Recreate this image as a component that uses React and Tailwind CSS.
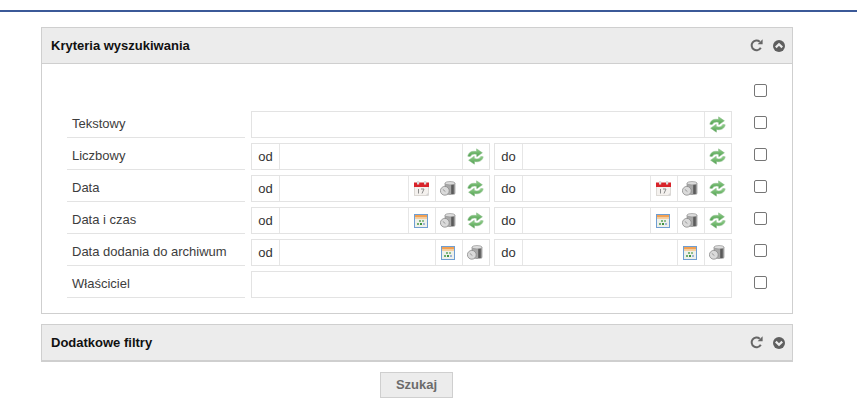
const F = { fontFamily: '"Liberation Sans", Arial, sans-serif' };

function Refresh() {
  return (
    <svg width="17" height="17" viewBox="0 0 17 17" className="block">
      <defs>
        <linearGradient id="gr" x1="0" y1="0" x2="0" y2="1">
          <stop offset="0" stopColor="#93d08c" />
          <stop offset="1" stopColor="#4f9f4f" />
        </linearGradient>
      </defs>
      <path d="M0.8 8.2 C1.4 4.4 5 2.4 9.4 3.6 L9.6 0.8 L15.4 4.8 L9.8 8.8 L9.6 6.4 C6.8 5.6 4.4 6.2 3.2 8.6 Z" fill="url(#gr)" stroke="#86b886" strokeWidth="0.5" />
      <path d="M16.2 8.8 C15.6 12.6 12 14.6 7.6 13.4 L7.4 16.2 L1.6 12.2 L7.2 8.2 L7.4 10.6 C10.2 11.4 12.6 10.8 13.8 8.4 Z" fill="url(#gr)" stroke="#86b886" strokeWidth="0.5" />
    </svg>
  );
}

function CalRed() {
  return (
    <svg width="15" height="15" viewBox="0 0 15 15" className="block">
      <rect x="0.5" y="4" width="14" height="10.5" fill="#f4f1ee" stroke="#c9c5c0" strokeWidth="0.6" />
      <rect x="0" y="1.5" width="15" height="4.5" fill="#d8232a" />
      <rect x="3" y="0" width="2.2" height="3.5" fill="#dcdcdc" />
      <rect x="10" y="0" width="2.2" height="3.5" fill="#dcdcdc" />
      <path d="M4.5 8 V12.5 M7 8 H10 L8 12.5" fill="none" stroke="#8d8d8d" strokeWidth="1" />
      <path d="M11.5 14.5 L14.5 11.5 V14.5 Z" fill="#d5d5d5" />
    </svg>
  );
}

function CalBlue() {
  return (
    <svg width="14" height="14" viewBox="0 0 14 14" className="block">
      <rect x="0.5" y="0.5" width="13" height="13" fill="#eef0ea" stroke="#6f9ed2" />
      <rect x="1" y="1" width="12" height="2.5" fill="#f2a154" />
      <rect x="1" y="3.5" width="12" height="1.5" fill="#f6cfa0" />
      <rect x="5" y="6" width="2" height="2" fill="#7fb77f" />
      <rect x="8" y="6" width="2" height="2" fill="#8ebf8e" />
      <rect x="3" y="9" width="2" height="2" fill="#6fae6f" />
      <rect x="6" y="9" width="2" height="2" fill="#3f923f" />
      <rect x="9" y="9" width="2" height="2" fill="#9fb5d5" />
    </svg>
  );
}

function Db() {
  return (
    <svg width="16" height="15" viewBox="0 0 16 15" className="block">
      <path d="M5 2.2 V12.6 C5 13.8 15 13.8 15 12.6 V2.2 Z" fill="#a8a8a8" stroke="#808080" strokeWidth="0.6" />
      <rect x="11.2" y="3" width="2.6" height="10" fill="#5a5a5a" />
      <ellipse cx="10" cy="2.2" rx="5" ry="1.7" fill="#dcdcdc" stroke="#8a8a8a" strokeWidth="0.6" />
      <circle cx="4.8" cy="9.8" r="4.4" fill="#dadada" stroke="#8c8c8c" strokeWidth="0.8" />
      <path d="M2.8 8.4 L5.4 10.6" stroke="#9a9a9a" strokeWidth="1" />
    </svg>
  );
}

function Reload() {
  return (
    <svg width="13" height="13" viewBox="0 0 13 13" className="block">
      <path d="M10.8 8.8 A4.9 4.9 0 1 1 9.8 2.7" fill="none" stroke="#666" strokeWidth="2" />
      <path d="M7.6 5.2 L12.6 5.2 L12.6 0.2 Z" fill="#666" />
    </svg>
  );
}

function Chevron({ up }) {
  return (
    <svg width="12" height="12" viewBox="0 0 12 12" className="block">
      <circle cx="6" cy="6" r="6" fill="#5f5f5f" />
      <path d={up ? "M2.8 7.4 L6 4.2 L9.2 7.4" : "M2.8 4.6 L6 7.8 L9.2 4.6"} fill="none" stroke="#ececec" strokeWidth="2.2" />
    </svg>
  );
}

const Cell = ({ children }) => (
  <div className="w-[27px] shrink-0 flex items-center justify-center border-l border-[#e6e6e6] h-full pr-[2px]">{children}</div>
);

function Range({ prefix, icons, wide }) {
  return (
    <div className={`${wide ? "w-[239px]" : "w-[238px]"} h-[27px] flex border border-[#e3e3e3]`}>
      <div className="w-[28px] shrink-0 flex items-center justify-center text-[13px] text-[#333] border-r border-[#e6e6e6]">
        {prefix}
      </div>
      <div className="flex-1 min-w-0" />
      {icons.map((ic, i) => <Cell key={i}>{ic}</Cell>)}
    </div>
  );
}

const Check = () => (
  <input type="checkbox" className="appearance-none block w-[13px] h-[13px] rounded-[2px] border border-[#767676] bg-white" />
);

function Row({ label, children }) {
  return (
    <div className="flex h-8 items-start">
      <div className="w-[178px] h-[27px] shrink-0 border-b border-[#e3e3e3] pl-[5px] text-[13px] leading-[25px] text-[#3d3d3d]">
        {label}
      </div>
      <div className="ml-[6px] w-[481px] flex justify-between">{children}</div>
      <div className="ml-[22px] h-[23px] flex items-center">
        <Check />
      </div>
    </div>
  );
}

function Head({ title, up }) {
  return (
    <div className="h-[35px] bg-[#ececec] flex items-center pl-[9px] pr-[7px]">
      <span className="flex-1 text-[13px] font-bold text-[#111]">{title}</span>
      <div className="flex items-center gap-[10px]">
        <Reload />
        <Chevron up={up} />
      </div>
    </div>
  );
}

export default function App() {
  const calR = [<CalRed />, <Db />, <Refresh />];
  const calB = [<CalBlue />, <Db />, <Refresh />];
  const calN = [<CalBlue />, <Db />];
  return (
    <div style={F} className="w-[857px] h-[403px] bg-white overflow-hidden">
      <div className="h-[12px] border-b-2 border-[#3b5998]" />
      <div className="ml-[41px] w-[752px] mt-[15px]">
        <div className="border border-[#cfcfcf]">
          <Head title="Kryteria wyszukiwania" up />
          <div className="border-t border-[#cfcfcf] pl-[25px] pt-[15px] h-[250px]">
            <div className="flex h-8 items-start justify-end pr-[25px]">
              <div className="h-[23px] flex items-center"><Check /></div>
            </div>
            <Row label="Tekstowy">
              <div className="w-full h-[27px] flex border border-[#e3e3e3] justify-end">
                <Cell><Refresh /></Cell>
              </div>
            </Row>
            <Row label="Liczbowy">
              <Range prefix="od" wide icons={[<Refresh />]} />
              <Range prefix="do" icons={[<Refresh />]} />
            </Row>
            <Row label="Data">
              <Range prefix="od" wide icons={calR} />
              <Range prefix="do" icons={calR} />
            </Row>
            <Row label="Data i czas">
              <Range prefix="od" wide icons={calB} />
              <Range prefix="do" icons={calB} />
            </Row>
            <Row label="Data dodania do archiwum">
              <Range prefix="od" wide icons={calN} />
              <Range prefix="do" icons={calN} />
            </Row>
            <Row label="Właściciel">
              <div className="w-full h-[27px] border border-[#e3e3e3]" />
            </Row>
          </div>
        </div>
        <div className="mt-[10px] border border-b-2 border-[#cfcfcf]">
          <Head title="Dodatkowe filtry" />
        </div>
        <div className="flex justify-center mt-[10px] pr-px">
          <button className="w-[73px] h-[26px] bg-[#ececec] border border-[#cfcfcf] text-[13px] font-bold text-[#6b6b6b]">
            Szukaj
          </button>
        </div>
      </div>
    </div>
  );
}
